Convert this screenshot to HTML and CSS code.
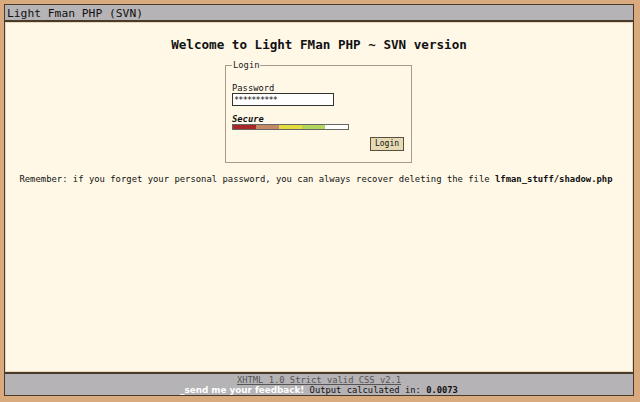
FILE: index.html
```html
<!DOCTYPE html>
<html lang="en">
<head>
  <meta charset="UTF-8" />
  <title>Light Fman PHP (SVN)</title>
  <link rel="stylesheet" href="styles.css">
</head>
<body>
  <div class="window">
    <div class="titlebar">Light Fman PHP (SVN)</div>

    <div class="content">
      <h1>Welcome to Light FMan PHP ~ SVN version</h1>

      <form class="login">
        <fieldset>
          <legend>Login</legend>
          <label for="pwd">Password</label>
          <input type="text" id="pwd" value="**********" />
          <div class="secure">Secure</div>
          <div class="meter">
            <span class="s1"></span><span class="s2"></span><span class="s3"></span><span class="s4"></span>
          </div>
          <div class="actions">
            <button type="button">Login</button>
          </div>
        </fieldset>
      </form>

      <p class="remember">Remember: if you forget your personal password, you can always recover deleting the file <b>lfman_stuff/shadow.php</b></p>
    </div>

    <div class="footer">
      <div><a href="#">XHTML 1.0 Strict valid CSS v2.1</a></div>
      <div><span class="feedback">_send me your feedback!</span> Output calculated in: <b>0.0073</b></div>
    </div>
  </div>
</body>
</html>
```

FILE: styles.css
```css
* {
  margin: 0;
  padding: 0;
  box-sizing: border-box;
}

html, body {
  height: 100%;
}

body {
  background: #d8aa7e;
  padding: 4px 6px 6px 4px;
  font-family: 'DejaVu Sans Mono', monospace;
  color: #111;
}

.window {
  height: 100%;
  display: flex;
  flex-direction: column;
  border: 1px solid #4a3a2a;
}

/* Title bar */
.titlebar {
  background: #b5b3b6;
  border-bottom: 2px solid #4a3a2a;
  height: 17px;
  padding: 2px 0 0 2px;
  font-size: 11.3px;
  line-height: 13px;
}

/* Content */
.content {
  flex: 1;
  background: #fff8e7;
  border: 1px solid #e6d8bc;
  text-align: center;
}

h1 {
  font-size: 12.6px;
  font-weight: bold;
  margin-top: 14px;
  line-height: 16px;
}

.login {
  display: flex;
  justify-content: center;
  margin-top: 7px;
}

fieldset {
  width: 187px;
  height: 103px;
  border: 1px solid #a89c88;
  padding: 0 6px;
  text-align: left;
  font-size: 8.8px;
  margin-left: -1px;
}

legend {
  padding: 0 1px;
  line-height: 10px;
  color: #222;
}

label {
  display: block;
  margin-top: 13px;
  line-height: 10px;
}

input {
  display: block;
  width: 102px;
  height: 13px;
  border: 1px solid #333;
  background: #fff;
  font-family: 'DejaVu Sans Mono', monospace;
  font-size: 8.5px;
  padding: 0 1px;
  letter-spacing: -0.8px;
  color: #111;
}

.secure {
  margin-top: 8px;
  font-weight: bold;
  font-style: italic;
  line-height: 10px;
}

.meter {
  display: flex;
  width: 117px;
  height: 6px;
  border: 1px solid #666;
  background: #fff;
}

.meter span {
  width: 23px;
}

.s1 { background: #a82626; }
.s2 { background: #c48a68; }
.s3 { background: #e4dc3e; }
.s4 { background: #b4d65c; }

.actions {
  display: flex;
  justify-content: flex-end;
  margin-top: 7px;
  padding-right: 1px;
}

button {
  width: 34px;
  height: 14px;
  background: #e6dab4;
  border: 1px solid #5a4e3c;
  font-family: 'DejaVu Sans Mono', monospace;
  font-size: 8px;
  line-height: 12px;
  color: #111;
}

.remember {
  font-size: 8.9px;
  margin-top: 10px;
  line-height: 12px;
  padding-right: 6px;
}

/* Footer */
.footer {
  background: #b5b3b6;
  border-top: 2px solid #4a3a2a;
  height: 23px;
  text-align: center;
  font-size: 8.8px;
  line-height: 10px;
  padding-top: 1px;
}

.footer a {
  color: #555;
}

.feedback {
  color: #fff;
  font-weight: bold;
  font-family: 'DejaVu Sans', sans-serif;
}
```
